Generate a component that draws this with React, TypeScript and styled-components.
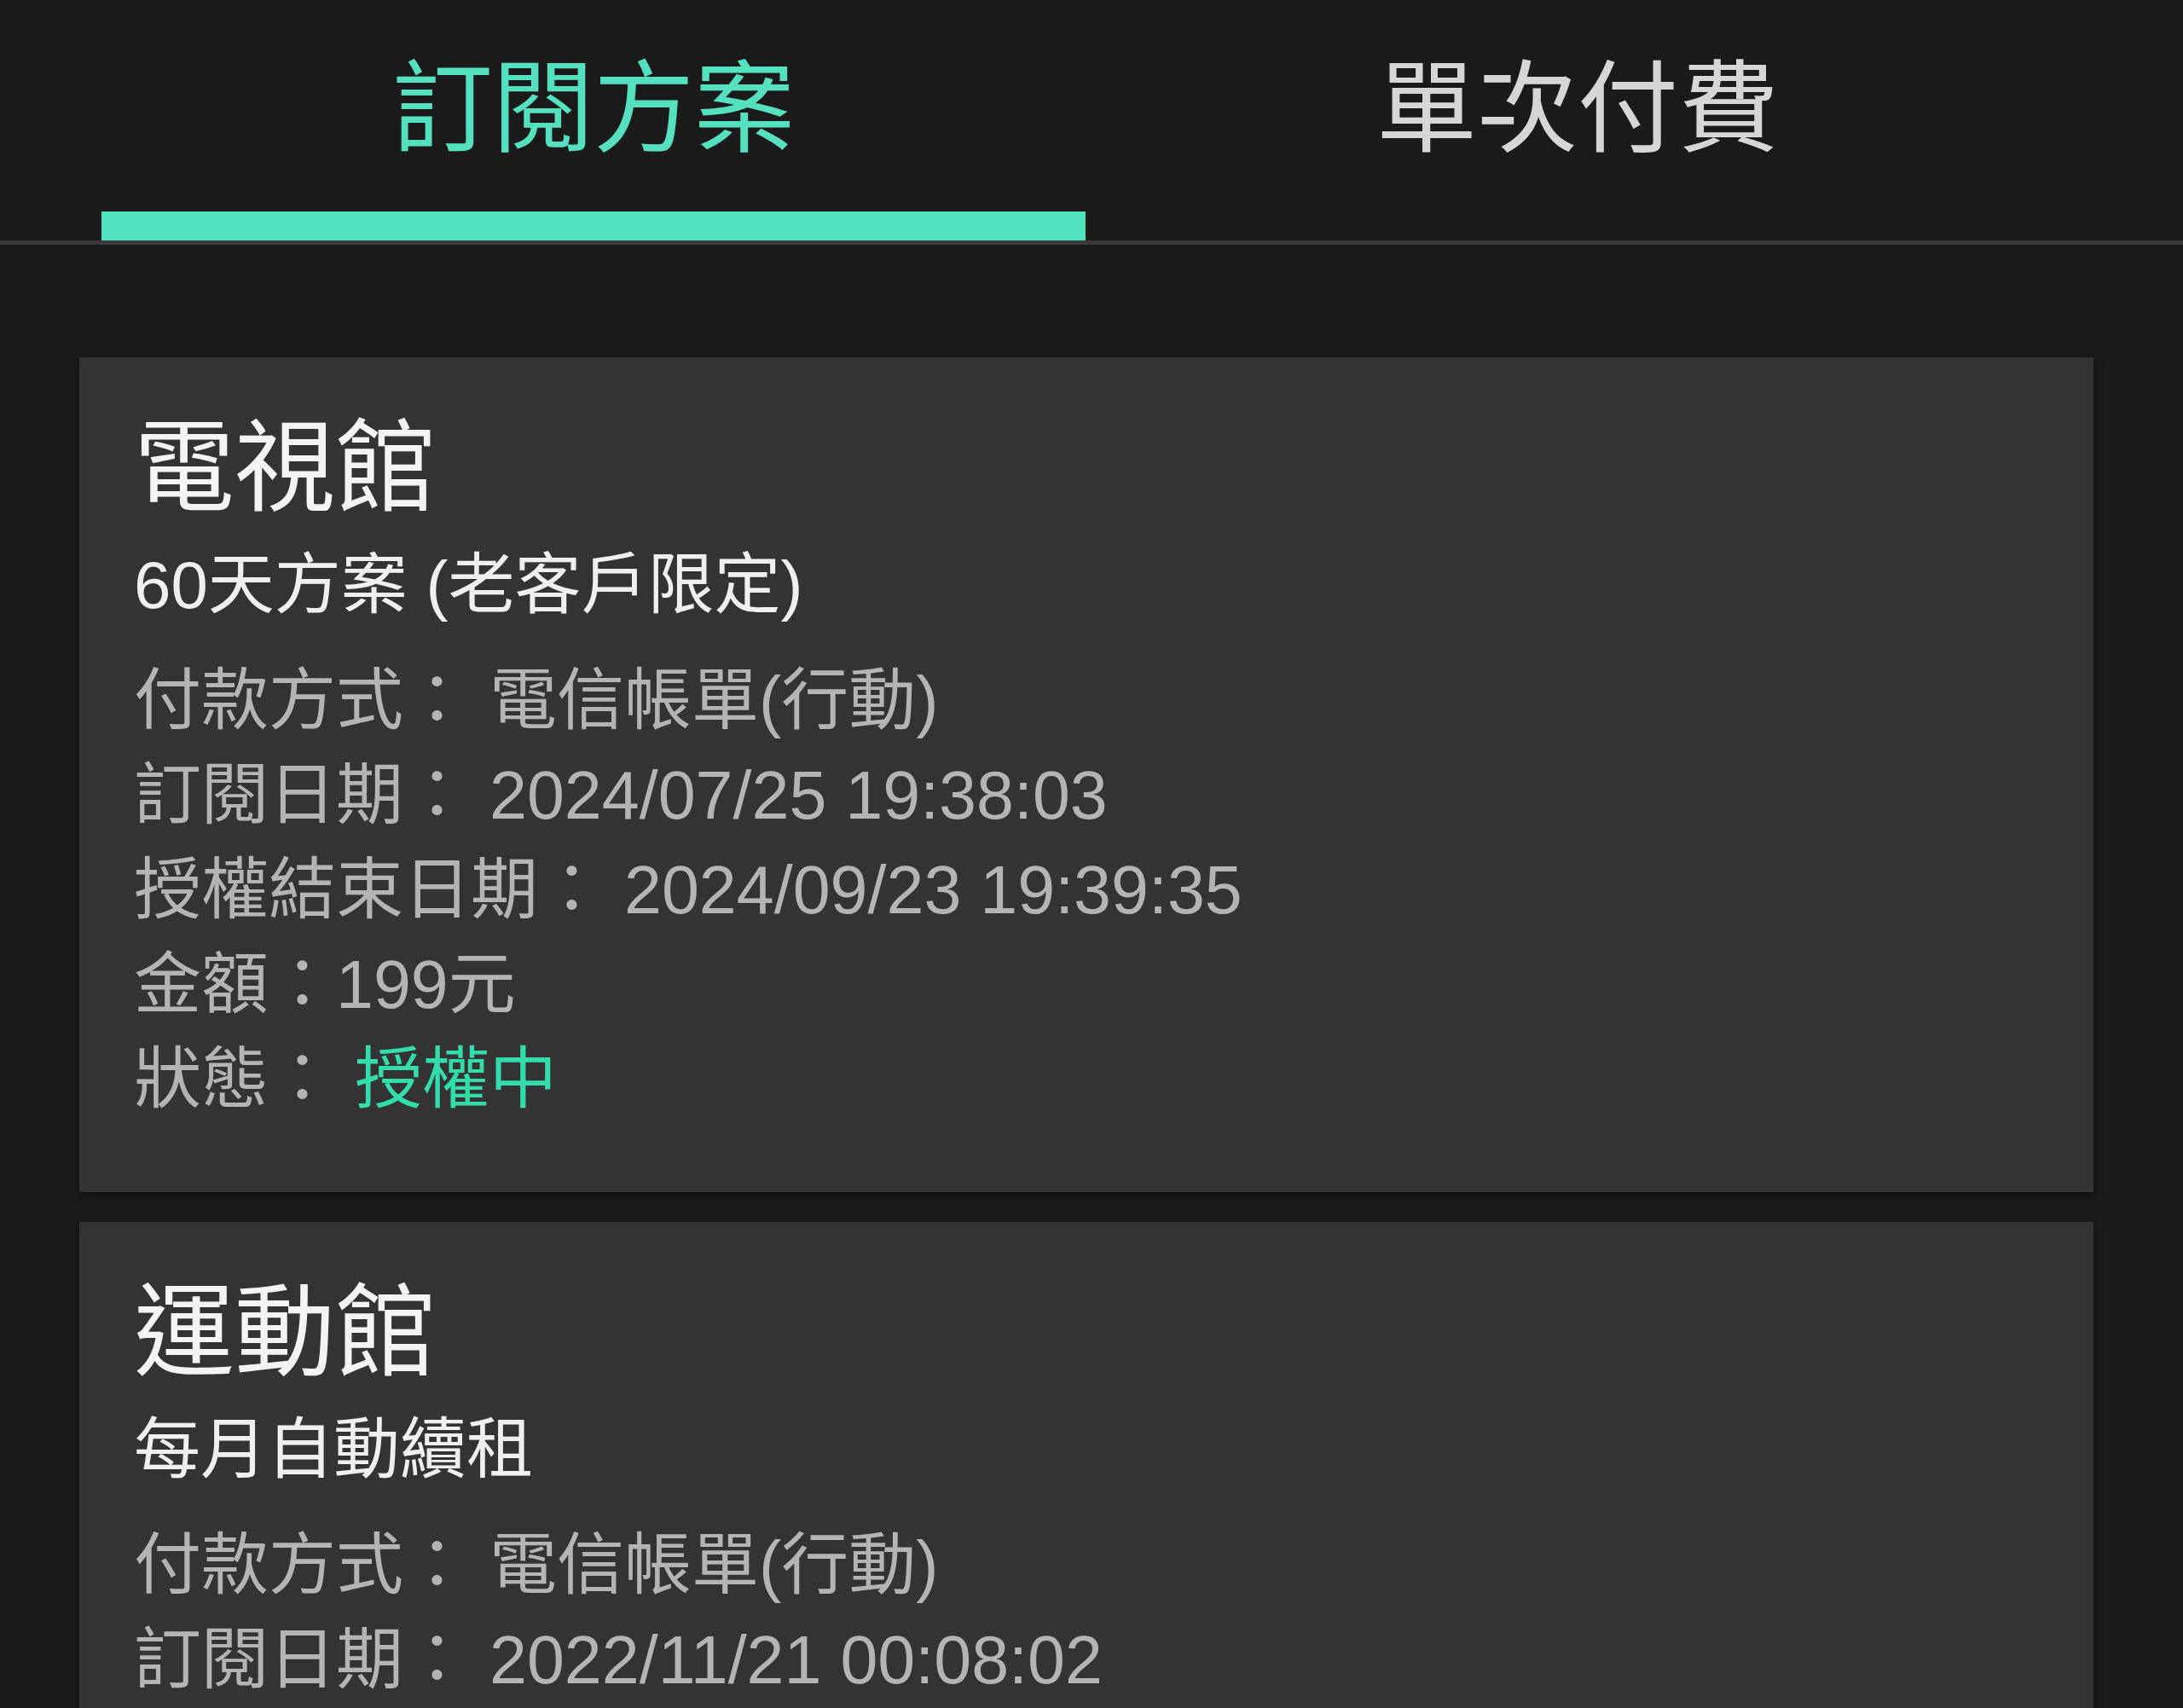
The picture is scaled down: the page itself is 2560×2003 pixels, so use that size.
import React from "react";
import styled, { createGlobalStyle } from "styled-components";

const GlobalStyle = createGlobalStyle`
  html, body {
    margin: 0;
    padding: 0;
    background: #1a1a1a;
  }
  body {
    font-family: "Liberation Sans", "Noto Sans CJK TC", sans-serif;
    overflow: hidden;
  }
`;

const Page = styled.div`
  width: 2560px;
  height: 2003px;
  background: #1a1a1a;
  overflow: hidden;
  display: flex;
  flex-direction: column;
`;

const TabBar = styled.div`
  display: flex;
  padding: 0 133px 0 119px;
  border-bottom: 5px solid #3a3a3a;
`;

const Tab = styled.div`
  flex: 1;
  display: flex;
  flex-direction: column;
  align-items: center;
`;

const TabLabel = styled.span<{ $active?: boolean }>`
  font-family: "Noto Sans CJK TC", sans-serif;
  font-size: 118px;
  line-height: 142px;
  padding: 47px 0 59px;
  color: ${(p) => (p.$active ? "#55e0c0" : "#d6d6d6")};
`;

const Indicator = styled.div<{ $active?: boolean }>`
  align-self: stretch;
  height: 34px;
  background: ${(p) => (p.$active ? "#50e1be" : "transparent")};
`;

const List = styled.div`
  display: flex;
  flex-direction: column;
  gap: 35px;
  padding: 132px 105px 0 93px;
`;

const Card = styled.div`
  background: #333333;
  padding: 59px 64px 77px;
  box-shadow: 0 4px 8px rgba(0, 0, 0, 0.55);
`;

const Title = styled.div`
  font-size: 118px;
  line-height: 142px;
  color: #f4f4f4;
`;

const Subtitle = styled.div`
  font-size: 78px;
  line-height: 100px;
  margin-top: 16px;
  color: #f0f0f0;
`;

const Rows = styled.div`
  display: flex;
  flex-direction: column;
  margin-top: 30px;
`;

const Row = styled.div`
  font-size: 79px;
  line-height: 111px;
  color: #b4b4b4;
  white-space: nowrap;
`;

const Value = styled.span<{ $accent?: boolean }>`
  color: ${(p) => (p.$accent ? "#33dcaa" : "inherit")};
`;

type Detail = { label: string; value: string; spaced?: boolean; accent?: boolean };
type Plan = { title: string; subtitle: string; details: Detail[] };

const plans: Plan[] = [
  {
    title: "電視館",
    subtitle: "60天方案 (老客戶限定)",
    details: [
      { label: "付款方式：", value: "電信帳單(行動)", spaced: true },
      { label: "訂閱日期：", value: "2024/07/25 19:38:03", spaced: true },
      { label: "授權結束日期：", value: "2024/09/23 19:39:35", spaced: true },
      { label: "金額：", value: "199元" },
      { label: "狀態：", value: "授權中", spaced: true, accent: true },
    ],
  },
  {
    title: "運動館",
    subtitle: "每月自動續租",
    details: [
      { label: "付款方式：", value: "電信帳單(行動)", spaced: true },
      { label: "訂閱日期：", value: "2022/11/21 00:08:02", spaced: true },
    ],
  },
];

export default function App() {
  return (
    <>
      <GlobalStyle />
      <Page>
        <TabBar>
          <Tab>
            <TabLabel $active>訂閱方案</TabLabel>
            <Indicator $active />
          </Tab>
          <Tab>
            <TabLabel>單次付費</TabLabel>
            <Indicator />
          </Tab>
        </TabBar>
        <List>
          {plans.map((plan) => (
            <Card key={plan.title}>
              <Title>{plan.title}</Title>
              <Subtitle>{plan.subtitle}</Subtitle>
              <Rows>
                {plan.details.map((d) => (
                  <Row key={d.label}>
                    {d.label}
                    {d.spaced ? " " : ""}
                    <Value $accent={d.accent}>{d.value}</Value>
                  </Row>
                ))}
              </Rows>
            </Card>
          ))}
        </List>
      </Page>
    </>
  );
}
